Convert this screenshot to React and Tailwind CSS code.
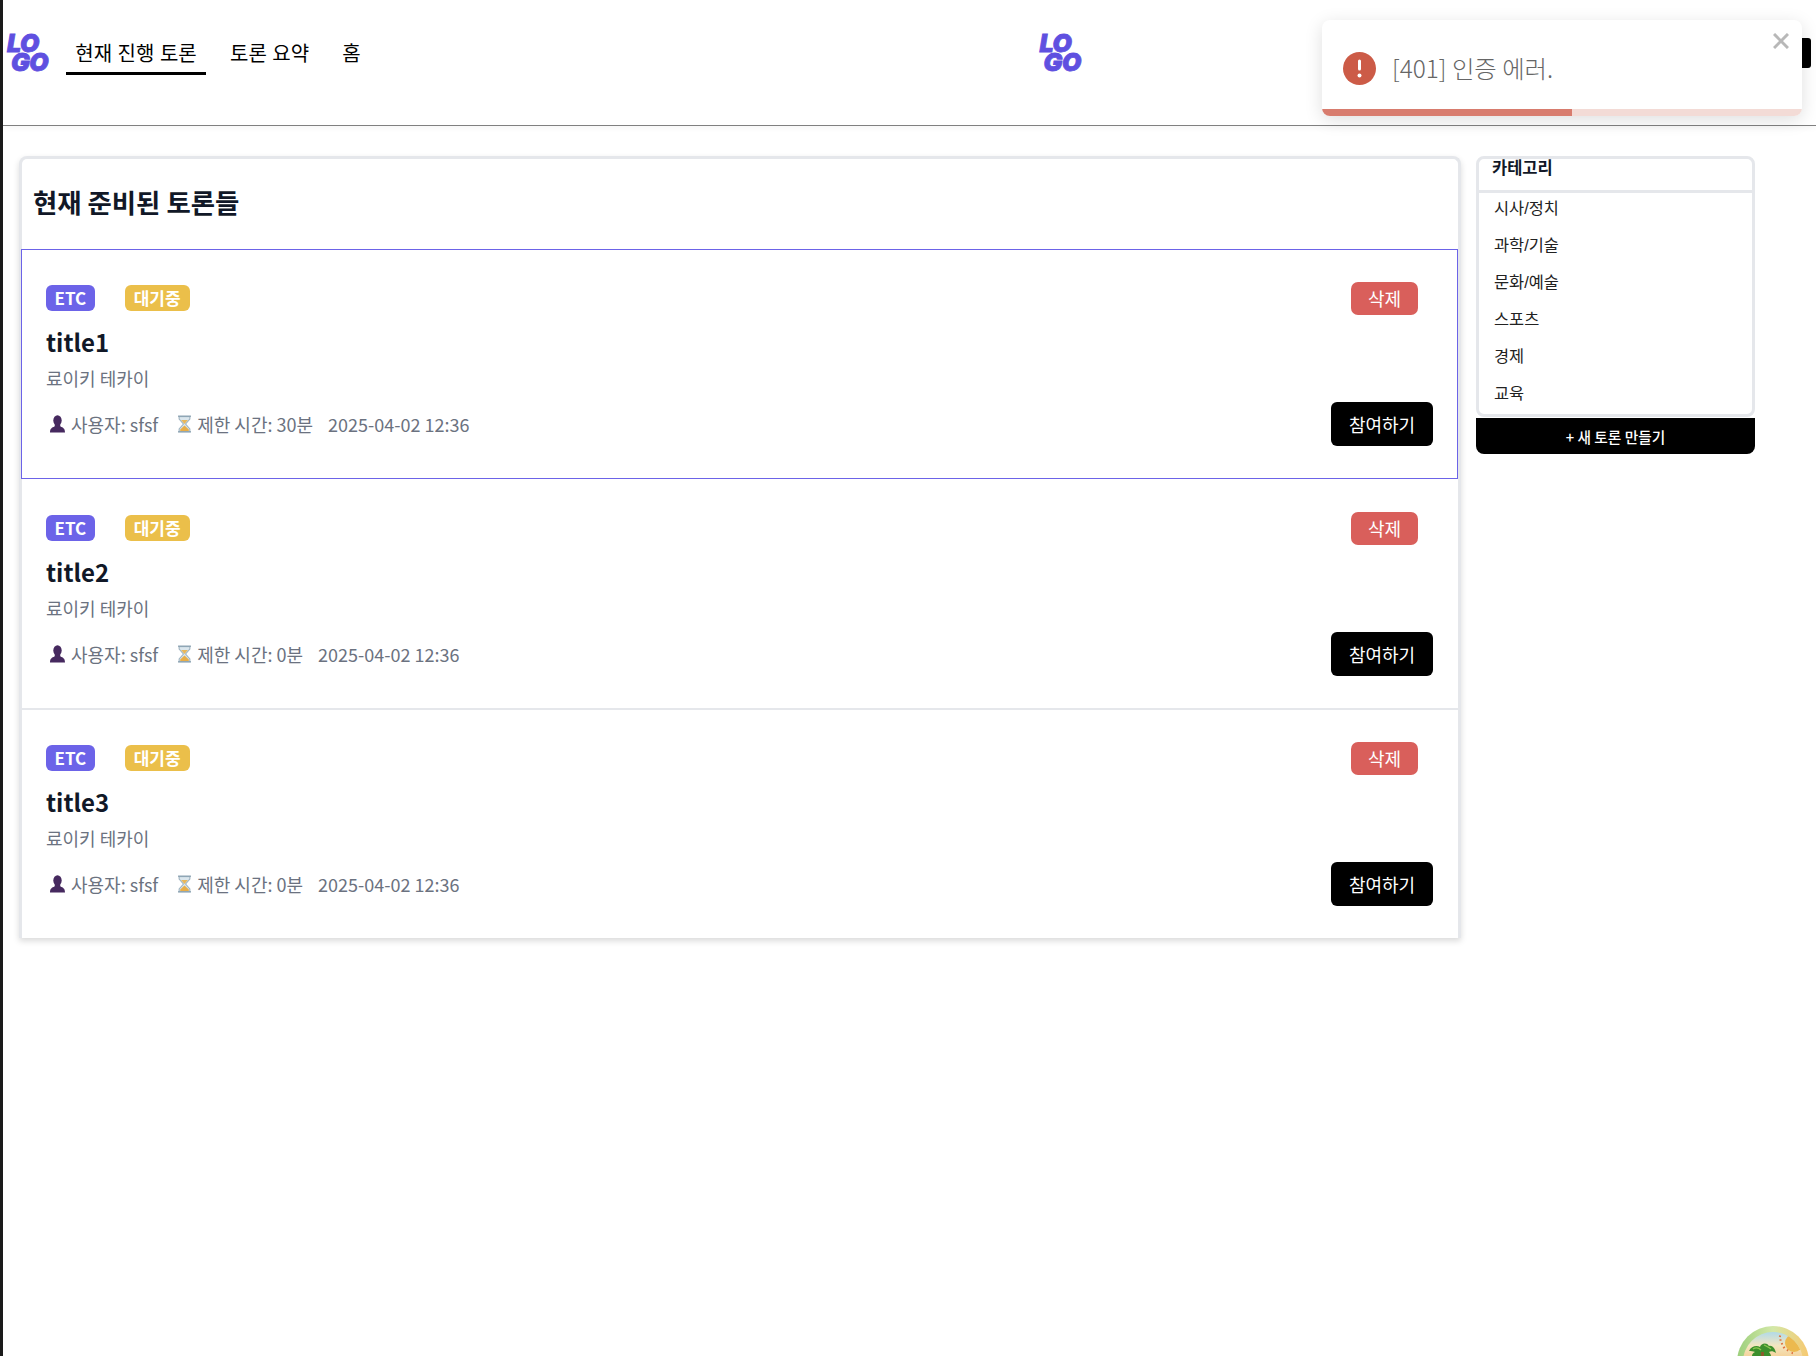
const FONT = "font-['Noto_Sans_CJK_KR','Noto_Sans',sans-serif]";
const THIN_FONT = "font-['Liberation_Sans','Noto_Sans_CJK_KR',sans-serif]";

const categories = ["시사/정치", "과학/기술", "문화/예술", "스포츠", "경제", "교육"];

const debates = [
  { id: 1, title: "title1", limit: "30분", active: true },
  { id: 2, title: "title2", limit: "0분" },
  { id: 3, title: "title3", limit: "0분", last: true },
];

const Logo = () => (
  <div className="w-[42px] h-[38px] flex flex-col font-['Inter',sans-serif] font-black italic text-[#5f50e0] text-[25px] tracking-[-0.5px] select-none [-webkit-text-stroke:0.8px_#5f50e0]">
    <span className="h-[19px] leading-[19px]">LO</span>
    <span className="h-[19px] leading-[19px] pl-[4px]">GO</span>
  </div>
);

const PersonIcon = () => (
  <svg width="17" height="18" viewBox="0 0 17 18" className="shrink-0">
    <ellipse cx="8.5" cy="5.5" rx="4.2" ry="5.2" fill="#46295f" />
    <path d="M6 9.5 L11 9.5 L11.5 11.5 C14 12.5 16 13.5 16 17.5 L1 17.5 C1 13.5 3 12.5 5.5 11.5 Z" fill="#46295f" />
  </svg>
);

const HourglassIcon = () => (
  <svg width="15" height="18" viewBox="0 0 14 18" preserveAspectRatio="none" className="shrink-0">
    <path d="M2 1.5 L12 1.5 L12 4 L8 9 L12 14 L12 16.5 L2 16.5 L2 14 L6 9 L2 4 Z" fill="#dbe7ee" />
    <path d="M3.8 5 L10.2 5 L7 9 Z" fill="#e9b75a" />
    <path d="M7 10.5 L11 14.5 L11 16 L3 16 L3 14.5 Z" fill="#e8ae48" />
    <rect x="1" y="0.5" width="12" height="1.6" fill="#8fa6b5" />
    <rect x="1" y="16" width="12" height="1.6" fill="#8fa6b5" />
    <path d="M2 2 L2 4 L6 9 L2 14 L2 16" fill="none" stroke="#9fb3c0" strokeWidth="1" />
    <path d="M12 2 L12 4 L8 9 L12 14 L12 16" fill="none" stroke="#9fb3c0" strokeWidth="1" />
  </svg>
);

const DebateItem = ({ item }) => (
  <div
    className={`pl-[24px] flex flex-col ${
      item.active
        ? "h-[230px] border border-[#6c63e8] -ml-px pt-[32px] pr-[24px]"
        : item.last
        ? "h-[228px] pt-[32px] pr-[25px]"
        : "h-[231px] pt-[33px] pr-[25px] border-b-2 border-[#e5e7eb]"
    }`}
  >
    <div className="flex items-start justify-between h-[33px]">
      <div className="flex items-center gap-[30px] pt-[3px]">
        <span className="h-[26px] px-[8.5px] rounded-[6px] bg-[#6c63e8] text-white text-[17px] font-bold leading-[26px]">ETC</span>
        <span className="h-[26px] px-[9px] rounded-[6px] bg-[#ebbf4a] text-white text-[17px] font-bold leading-[26px]">대기중</span>
      </div>
      <button className="w-[67px] h-[33px] mr-[15px] rounded-[7px] bg-[#d95f5b] text-white text-[18px] leading-[33px]">삭제</button>
    </div>
    <h3 className="mt-[9px] text-[24px] leading-[36px] font-semibold text-[#111827]">{item.title}</h3>
    <p className="mt-[5px] text-[18px] leading-[26px] text-[#6b7280]">료이키 테카이</p>
    <div className="mt-[11px] flex items-center justify-between">
      <div className="flex items-center text-[18px] text-[#6b7280] pl-[3px]">
        <span className="flex items-center gap-[5px]"><PersonIcon />사용자: sfsf</span>
        <span className="flex items-center gap-[5px] ml-[19px]"><HourglassIcon />제한 시간: {item.limit}</span>
        <span className="ml-[15px]">2025-04-02 12:36</span>
      </div>
      <button className="w-[102px] h-[44px] rounded-[6px] bg-black text-white text-[18px]">참여하기</button>
    </div>
  </div>
);

const Toast = () => (
  <div className="absolute left-[1319px] top-[20px] w-[480px] h-[96px] bg-white rounded-[8px] shadow-[0_4px_18px_rgba(0,0,0,0.13)] overflow-hidden">
    <div className="flex items-center h-[89px] pl-[21px] pt-[7px]">
      <svg width="33" height="33" viewBox="0 0 33 33" className="shrink-0">
        <circle cx="16.5" cy="16.5" r="16.5" fill="#cc5b47" />
        <rect x="15" y="7.5" width="3" height="11" rx="1.5" fill="#ffffff" />
        <circle cx="16.5" cy="23.5" r="2" fill="#ffffff" />
      </svg>
      <span className="ml-[16px] text-[24.4px] font-light text-[#666666]">[401] 인증 에러.</span>
    </div>
    <svg width="16" height="16" viewBox="0 0 16 16" className="absolute left-[451px] top-[13px]">
      <path d="M1 1 L15 15 M15 1 L1 15" stroke="#b8b8b8" strokeWidth="3" />
    </svg>
    <div className="flex h-[7px]">
      <div className="w-[250px] bg-[#d87c6e]" />
      <div className="flex-1 bg-[#f3dbd6]" />
    </div>
  </div>
);

const Badge = () => (
  <svg width="80" height="32" viewBox="0 0 80 32" className="absolute left-[1733px] top-[1324px]">
    <defs>
      <clipPath id="inner">
        <circle cx="37" cy="38" r="30" />
      </clipPath>
      <linearGradient id="ring" x1="0" x2="1" y1="0" y2="0">
        <stop offset="0" stopColor="#9ccf7c" />
        <stop offset="0.5" stopColor="#d3e8a8" />
        <stop offset="1" stopColor="#f7c870" />
      </linearGradient>
      <linearGradient id="sky" x1="0" x2="0" y1="0" y2="1">
        <stop offset="0" stopColor="#a8d8ee" />
        <stop offset="0.6" stopColor="#f3e6c0" />
        <stop offset="1" stopColor="#f5d49e" />
      </linearGradient>
    </defs>
    <circle cx="37" cy="38" r="36" fill="url(#ring)" />
    <g clipPath="url(#inner)">
      <rect x="0" y="6" width="74" height="26" fill="url(#sky)" />
      <circle cx="58" cy="19" r="9" fill="#ecb94e" />
      <path d="M43 12 L45 12.5 M43.5 16 L45.5 16 M45 20 L47 19.5 M47 24 L49 23 M51 27 L52 25.5 M56 30 L56.5 28" stroke="#e0733f" strokeWidth="1.4" />
    </g>
    <path d="M13 27 C15 22 21 21 24 23 C25 19 31 18 33 22 C36 21 39 24 40 29 C37 27 35 27 33 28 C34 29 35 31 35 32 L16 32 C16 30 17 29 19 28 C17 27 15 27 13 27 Z" fill="#3c8f2c" />
    <path d="M17 25 C20 23 23 24 25 26 M28 21 C30 22 33 23 35 25" stroke="#8cc850" strokeWidth="1.3" fill="none" />
    <rect x="25" y="28" width="3" height="4" fill="#8a5a2c" />
  </svg>
);

export default function App() {
  return (
    <div className={`relative w-[1816px] h-[1356px] overflow-hidden bg-white border-l-[3px] border-[#1a1a1a] ${FONT}`}>
      <header className="h-[126px] border-b border-[#808080] flex items-start pl-[4px] shadow-[0_2px_6px_rgba(0,0,0,0.04)]">
        <div className="mt-[34px]"><Logo /></div>
        <nav className={`flex ml-[17px] mt-[34px] text-[20px] leading-[40px] text-black ${THIN_FONT}`}>
          <a className="w-[140px] h-[41px] text-center border-b-[3px] border-black">현재 진행 토론</a>
          <a className="ml-[24px]">토론 요약</a>
          <a className="ml-[33px]">홈</a>
        </nav>
        <div className="mt-[34px] ml-[679px]"><Logo /></div>
        <div className="ml-auto mr-[5px] mt-[38px] w-[60px] h-[30px] bg-black rounded-[3px]" />
      </header>

      <main className="flex items-start gap-[15px] pl-[16px] pt-[30px]">
        <section className="w-[1442px] border-[3px] border-b-0 border-[#e5e7eb] rounded-t-[8px] shadow-[0_3px_6px_rgba(0,0,0,0.15)] bg-white">
          <h2 className="h-[90px] pl-[11px] pt-[5px] text-[26.4px] leading-[75px] font-semibold text-[#111827]">현재 준비된 토론들</h2>
          {debates.map((d) => (
            <DebateItem key={d.id} item={d} />
          ))}
        </section>

        <aside className="w-[279px]">
          <div className="h-[261px] border-[3px] border-[#e5e7eb] rounded-[8px] overflow-hidden">
            <div className="h-[34px] border-b-[3px] border-[#e5e7eb] pl-[13px] text-[16.5px] font-semibold leading-[16px] text-[#111827]">카테고리</div>
            <ul className={`-mt-[3px] text-[16.4px] leading-[37px] text-[#222222] ${THIN_FONT}`}>
              {categories.map((c) => (
                <li key={c} className="pl-[15px] h-[37px]">{c}</li>
              ))}
            </ul>
          </div>
          <button className="block w-full h-[36px] pt-[2px] mt-[1px] bg-black text-white text-[14.7px] font-medium rounded-b-[8px]">+ 새 토론 만들기</button>
        </aside>
      </main>

      <Toast />
      <Badge />
    </div>
  );
}
